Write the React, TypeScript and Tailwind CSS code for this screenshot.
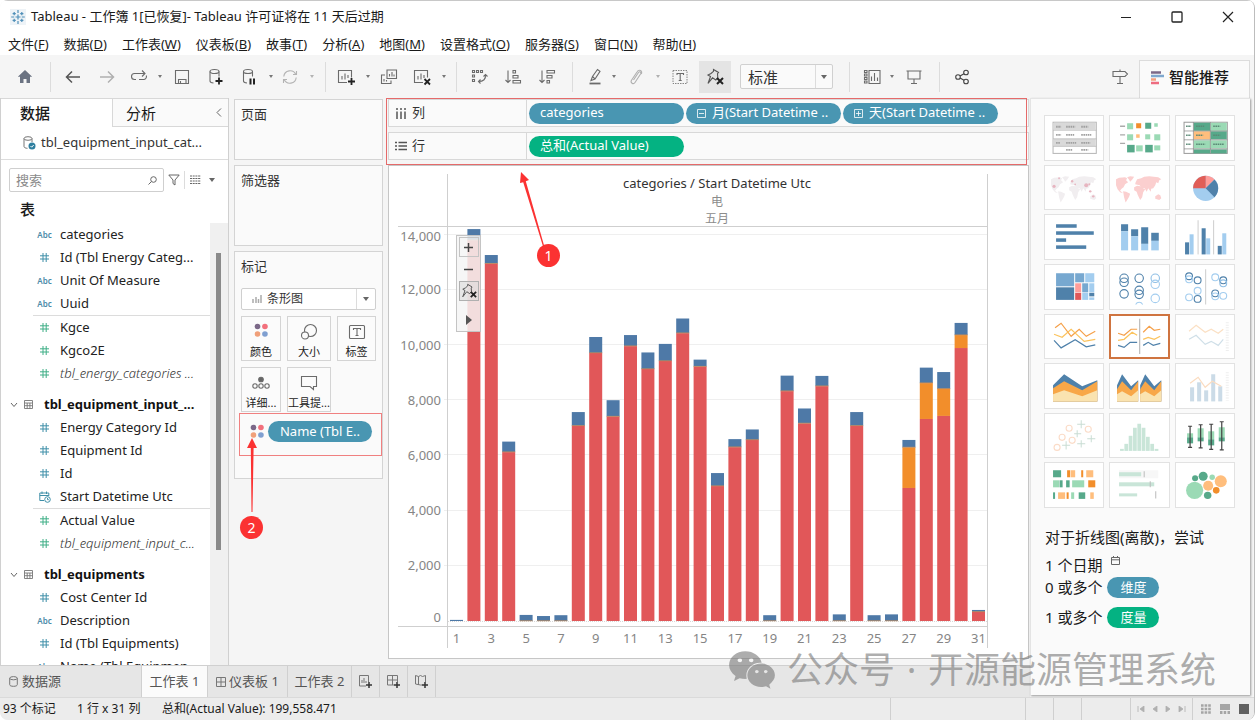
import React from "react";
import { FaWeixin } from "react-icons/fa";

type Kids = { children: React.ReactNode };

/* ---------- small drawing helpers ---------- */

function Glyph({ children, size = 18, color = "#6b6b6b" }: Kids & { size?: number; color?: string }) {
  return (
    <svg width={size} height={size} viewBox="0 0 18 18" fill="none" stroke={color} strokeWidth="1.1" className="shrink-0" aria-hidden="true">
      {children}
    </svg>
  );
}

function Caret({ color = "#666" }: { color?: string }) {
  return (
    <svg width="6" height="4" viewBox="0 0 6 4" aria-hidden="true">
      <path d="M0 0h6L3 4z" fill={color} />
    </svg>
  );
}

function SmallCaret({ color = "#777" }: { color?: string }) {
  return (
    <svg width="4" height="3" viewBox="0 0 4 3" aria-hidden="true">
      <path d="M0 0h4L2 3z" fill={color} />
    </svg>
  );
}

function Pin({ size = 18 }: { size?: number }) {
  return (
    <Glyph size={size} color="#555">
      <path d="M7.5 1.5l5 3-1 1.2.3 4-2 2.3-3.3-2.2L2 15.500l2.500-7L2 7l3-1.500 2.500-2.200z" />
      <path d="M11 10l6 6M17 10l-6 6" stroke="#222" strokeWidth="2" />
    </Glyph>
  );
}

function ColorDots() {
  return (
    <svg width="14" height="14" viewBox="0 0 16 16" className="shrink-0" aria-hidden="true">
      <circle cx="4" cy="4" r="3.200" fill="#7b6888" />
      <circle cx="12.500" cy="4" r="3.200" fill="#f2707c" />
      <circle cx="4" cy="12.500" r="3.200" fill="#f0a07a" />
      <circle cx="12.500" cy="12.500" r="3.200" fill="#7f9fd0" />
    </svg>
  );
}

/* ---------- title bar and menu ---------- */

const menus: [string, string][] = [
  ["文件", "F"], ["数据", "D"], ["工作表", "W"], ["仪表板", "B"], ["故事", "T"], ["分析", "A"],
  ["地图", "M"], ["设置格式", "O"], ["服务器", "S"], ["窗口", "N"], ["帮助", "H"],
];

function TitleBar() {
  return (
    <header className="flex h-[33px] shrink-0 items-center border-t border-[#c8c8c8] bg-white pl-2.5 text-[13px] text-[#1a1a1a]">
      <svg width="16" height="16" viewBox="0 0 16 16" className="mr-[5px] bg-[#eef3f7]" stroke="#4f8fb8" strokeWidth="1.2" aria-hidden="true">
        <path d="M8 5.500v5M5.500 8h5M8 1v3M8 12v3M1.200 8h3M11.800 8h3M4.200 3v3.200M2.600 4.600h3.200M11.800 3v3.200M10.200 4.600h3.200M4.200 9.800V13M2.600 11.400h3.200M11.800 9.800V13M10.200 11.400h3.200" />
      </svg>
      <h1>Tableau - 工作簿 1[已恢复]- Tableau 许可证将在 11 天后过期</h1>
      <div className="ml-auto flex items-center">
        <button aria-label="最小化" className="flex w-[51px] justify-center">
          <svg width="12" height="12" viewBox="0 0 12 12" stroke="#222"><path d="M1 6.500h10" /></svg>
        </button>
        <button aria-label="最大化" className="flex w-[51px] justify-center">
          <svg width="12" height="12" viewBox="0 0 12 12" stroke="#222" fill="none"><rect x="1" y="1" width="10" height="10" rx="1" strokeWidth="1.300" /></svg>
        </button>
        <button aria-label="关闭" className="flex w-[52px] justify-center">
          <svg width="12" height="12" viewBox="0 0 12 12" stroke="#222"><path d="M1 1l10 10M11 1L1 11" strokeWidth="1.200" /></svg>
        </button>
      </div>
    </header>
  );
}

function MenuBar() {
  return (
    <nav className="flex h-[22px] shrink-0 items-center gap-[15px] bg-white pl-2 pt-0.5 text-[13px] text-[#1a1a1a]">
      {menus.map(([name, key]) => (
        <button key={name} className="whitespace-nowrap">
          {name}(<span className="underline">{key}</span>)
        </button>
      ))}
    </nav>
  );
}

/* ---------- toolbar ---------- */

function Tool({ label, className, children }: Kids & { label: string; className: string }) {
  return (
    <button aria-label={label} className={`flex h-8 shrink-0 items-center justify-center ${className}`}>
      {children}
    </button>
  );
}

function Sep({ className }: { className: string }) {
  return <span className={`h-[30px] w-px shrink-0 bg-[#dcdcdc] ${className}`} />;
}

function Toolbar() {
  return (
    <div className="flex h-[43px] shrink-0 items-center">
      <Tool label="主页" className="ml-[9px] w-8">
        <svg width="16" height="15" viewBox="0 0 16 15"><path d="M8 1L.8 7.800H3V14h3.500v-4h3v4H13V7.800h2.200z" fill="#6b7382" /></svg>
      </Tool>
      <Sep className="ml-[9px]" />
      <Tool label="撤消" className="ml-[5px] w-[34px]">
        <Glyph color="#555"><path d="M2.500 9h13.500M8 3.500L2.500 9 8 14.500" strokeWidth="1.500" /></Glyph>
      </Tool>
      <Tool label="重做" className="w-[34px]">
        <Glyph color="#b0b0b0"><path d="M2 9h13.500M10 3.500l5.500 5.500-5.500 5.500" strokeWidth="1.500" /></Glyph>
      </Tool>
      <Tool label="重播" className="w-[30px]">
        <Glyph><path d="M6 11.500H4.500a3 3 0 010-6h10M12 2.500l3 3-3 3M9 11.500h4.500a3 3 0 002.800-4" /></Glyph>
      </Tool>
      <Tool label="重播选项" className="w-3"><SmallCaret /></Tool>
      <Tool label="保存" className="w-8">
        <Glyph><path d="M2.500 2.500h13v13h-13zM5.500 15.500v-4h7.500v4M7.500 15.500V13" /></Glyph>
      </Tool>
      <Tool label="新建数据源" className="w-[34px]">
        <Glyph><ellipse cx="8.500" cy="3.500" rx="4.500" ry="2" /><path d="M4 3.500v9.500c0 1 1.500 1.800 3.500 2M13 3.500v5" /><path d="M13 9.500v7M9.500 13h7" stroke="#222" strokeWidth="1.800" /></Glyph>
      </Tool>
      <Tool label="暂停自动更新" className="w-[34px]">
        <Glyph><ellipse cx="8" cy="3.500" rx="4.500" ry="2" /><path d="M3.500 3.500v9.500c0 1 1.500 1.800 3.500 2M12.500 3.500v5" /><path d="M10.500 10.500v6M14 10.500v6" stroke="#222" strokeWidth="2" /></Glyph>
      </Tool>
      <Tool label="更新选项" className="w-[10px]"><SmallCaret /></Tool>
      <Tool label="刷新" className="w-7">
        <Glyph color="#b3b3b3"><path d="M2.800 8.500a6.300 6.300 0 0112-2M15.200 9.500a6.300 6.300 0 01-12 2M15.500 3v3.500H12M2.500 15v-3.500H6" /></Glyph>
      </Tool>
      <Tool label="刷新选项" className="w-4"><SmallCaret color="#b3b3b3" /></Tool>
      <Sep className="ml-[5px]" />
      <Tool label="新建工作表" className="ml-1 w-8">
        <Glyph><path d="M10 14.500H1.500v-12h13v7M5 11.500V8M8 11.500V5.500M11 10V7" /><path d="M14.500 10v7M11 13.500h7" stroke="#222" strokeWidth="1.800" /></Glyph>
      </Tool>
      <Tool label="新建选项" className="w-3"><SmallCaret /></Tool>
      <Tool label="复制" className="w-[30px]">
        <Glyph><path d="M7 2h9.500v8.500H7zM5 7H1.500v8.500H11V12.500M9.500 8.500V6M12 8.500V4M14 8.500V6.500M4 13.500V11M6.500 13.500V12" /></Glyph>
      </Tool>
      <Tool label="清除工作表" className="w-[35px]">
        <Glyph><path d="M10 14.500H1.500v-12h13v7M5 11.500V8M8 11.500V5.500M11 10V7" /><path d="M11.500 11l5.500 5.500M17 11l-5.500 5.500" stroke="#222" strokeWidth="1.800" /></Glyph>
      </Tool>
      <Tool label="清除选项" className="w-[10px]"><SmallCaret /></Tool>
      <Sep className="ml-[7px]" />
      <Tool label="交换行和列" className="ml-[5px] w-[34px]">
        <Glyph><path d="M2.500 2.500h2v2h-2zM6.500 2.500h2v2h-2zM10.500 2.500h2v2h-2zM2.500 7h2v2h-2zM2.500 11.500h2v2h-2zM15.500 7c.5 4-2 6.500-7 6.500M13.500 8.500l2-2 2 2M10.500 11.500l-2 2 2 2" /></Glyph>
      </Tool>
      <Tool label="升序排序" className="w-[34px]">
        <Glyph><path d="M4 2.500v12M1.500 12L4 14.500 6.500 12M9 2.500h2.500v2.500H9zM9 7.500h5V10H9zM9 12.500h7.500V15H9z" /></Glyph>
      </Tool>
      <Tool label="降序排序" className="w-[34px]">
        <Glyph><path d="M4 2.500v12M1.500 12L4 14.500 6.500 12M9 2.500h7.500V5H9zM9 7.500h5V10H9zM9 12.500h2.500V15H9z" /></Glyph>
      </Tool>
      <Sep className="ml-2" />
      <Tool label="突出显示" className="ml-[7px] w-[30px]">
        <Glyph><path d="M5 12.500l1.500-4L11.500 1.500l2.500 1.800L9 11zM6.500 8.500L9 11" /><path d="M3.500 15.500h11" strokeWidth="1.800" /></Glyph>
      </Tool>
      <Tool label="突出显示选项" className="w-2"><SmallCaret /></Tool>
      <Tool label="成员分组" className="w-9">
        <Glyph color="#b0b0b0"><path d="M6.500 12l5-7.500c1-1.500 3-.2 2.200 1.300L8 14.500c-1.600 2.500-5 .3-3.500-2.200L10 4c2-3.500 6-1 4.300 2" /></Glyph>
      </Tool>
      <Tool label="分组选项" className="w-2"><SmallCaret color="#b0b0b0" /></Tool>
      <Tool label="显示标记标签" className="w-9">
        <Glyph><rect x="2" y="2.500" width="14" height="13" strokeDasharray="1.500 1" strokeWidth=".8" /><path d="M6 7V5.500h6.500V7M9.200 5.500v7M7.700 12.500h3" /></Glyph>
      </Tool>
      <Tool label="固定轴" className="ml-px w-8 bg-[#e4e4e4]"><Pin /></Tool>
      <div className="relative ml-[9px] w-[93px] shrink-0">
        <select aria-label="适合" className="h-[25px] w-full appearance-none rounded-[2px] border border-[#d0d0d0] bg-[#fafafa] pl-[7px] text-[15px] leading-[22px] text-[#333]">
          <option>标准</option>
        </select>
        <span className="pointer-events-none absolute inset-y-px right-px flex w-[17px] items-center justify-center border-l border-[#dcdcdc]"><Caret /></span>
      </div>
      <Sep className="ml-4" />
      <Tool label="显示/隐藏卡" className="ml-[6px] w-8">
        <Glyph><path d="M6 2.500h11v13H6zM8.500 13V8.500M11.500 13V5M14.500 13V9.500M1.500 2.500h2.500v2H1.500zM1.500 6h2.500v2H1.500zM1.500 9.500h2.500v2H1.500zM1.500 13h2.500v2H1.500z" /></Glyph>
      </Tool>
      <Tool label="卡选项" className="w-2"><SmallCaret /></Tool>
      <Tool label="演示模式" className="w-9">
        <Glyph><path d="M1.500 3h15M3 3v8h12V3M9 11v4.500M6 15.500h6" /></Glyph>
      </Tool>
      <Sep className="ml-[7px]" />
      <Tool label="共享" className="ml-[6px] w-8">
        <Glyph color="#444"><circle cx="5" cy="9" r="2.300" /><circle cx="13" cy="4.500" r="2.300" /><circle cx="13" cy="13.500" r="2.300" /><path d="M7 8l4-2.300M7 10l4 2.300" /></Glyph>
      </Tool>
      <Tool label="数据指南" className="ml-auto mr-[3px] w-8">
        <Glyph><path d="M2 3.500h12l2.500 2.500L14 8.500H2zM9 1.500v2M9 8.500v7M6 15.500h6" /></Glyph>
      </Tool>
      <button className="mr-1 mt-[5px] flex w-[111px] shrink-0 items-center gap-[5px] self-stretch border border-b-0 border-[#dcdcdc] bg-[#fafafa] pb-1 pl-[11px] text-[15px] font-medium text-[#1a1a1a]">
        <svg width="13" height="14" viewBox="0 0 13 14" aria-hidden="true">
          <path d="M0 1.500h10" stroke="#7b6888" strokeWidth="2.500" />
          <path d="M0 5h13" stroke="#7fa8cf" strokeWidth="2.500" />
          <path d="M0 8.500h5" stroke="#f2a080" strokeWidth="2.500" />
          <path d="M0 12h8" stroke="#ee6c80" strokeWidth="2.500" />
        </svg>
        智能推荐
      </button>
    </div>
  );
}

/* ---------- data pane ---------- */

type Kind = "abc" | "num" | "date";
type Field = [Kind, string];

function FieldIcon({ kind, color }: { kind: Kind; color: string }) {
  if (kind === "abc") return <span className="w-[16px] text-center text-[8px] font-semibold text-[#4b8aa8]">Abc</span>;
  if (kind === "date")
    return (
      <svg width="12" height="12" viewBox="0 0 12 12" fill="none" stroke={color}>
        <path d="M5 9.500H.8V2h9v3M.8 4.500h9M3 .5V3M7.500.5V3" />
        <circle cx="8.500" cy="8.500" r="2.800" />
        <path d="M8.500 7v1.700h1.300" />
      </svg>
    );
  return (
    <svg width="9" height="9" viewBox="0 0 9 9" stroke={color} strokeWidth="1">
      <path d="M3 0v9M6.200 0v9M0 2.800h9M0 6h9" />
    </svg>
  );
}

function FieldRow({ field, measure, italic }: { field: Field; measure?: boolean; italic?: boolean }) {
  return (
    <li className="flex h-[23px] items-center">
      <span className="ml-[3px] mr-[7px] flex w-[17px] justify-center">
        <FieldIcon kind={field[0]} color={measure ? "#3fae86" : "#3f8fa8"} />
      </span>
      <span className={italic ? "font-light italic text-[#333]" : "text-[#222]"}>{field[1]}</span>
    </li>
  );
}

function FieldGroup({ title, dims, measures }: { title?: string; dims: Field[]; measures: Field[] }) {
  return (
    <section>
      {title && (
        <h3 className="mt-2 flex h-[23px] items-center pl-[9px] font-bold text-[#111]">
          <svg width="8" height="8" viewBox="0 0 8 8" fill="none" stroke="#666"><path d="M1 2l3 3.500L7 2" /></svg>
          <svg width="9" height="9" viewBox="0 0 9 9" fill="none" stroke="#777" strokeWidth=".9" className="ml-[6px] mr-[11px]">
            <path d="M.5.5h8v8h-8zM.5 3h8M.5 5.700h8M3.200 3v5.500M5.900 3v5.500" />
          </svg>
          {title}
        </h3>
      )}
      <ul className="ml-8 border-b border-[#dcdcdc]">
        {dims.map((f) => <FieldRow key={f[1]} field={f} />)}
      </ul>
      <ul className="ml-8">
        {measures.map((f) => <FieldRow key={f[1]} field={f} measure italic={f[1].startsWith("tbl_")} />)}
      </ul>
    </section>
  );
}

function DataPane() {
  return (
    <aside className="flex w-[229px] shrink-0 flex-col border-x border-[#d0d0d0] bg-white">
      <div className="flex h-[29px] shrink-0 border-t border-[#d8d8d8] text-[15px] text-[#1a1a1a]">
        <button className="w-[111px] pl-[19px] text-left font-medium leading-[28px]">数据</button>
        <button className="flex flex-1 items-center justify-between border-b border-l border-[#d8d8d8] bg-[#fafafa] pl-[13px] pr-[6px] leading-[28px]">
          分析
          <svg width="6" height="9" viewBox="0 0 6 9" fill="none" stroke="#666"><path d="M5 .5l-4 4 4 4" /></svg>
        </button>
      </div>
      <div className="flex h-[33px] shrink-0 items-center gap-[5px] whitespace-nowrap border-b border-[#dcdcdc] pl-[22px] text-[13px] text-[#333]">
        <svg width="13" height="14" viewBox="0 0 13 14" fill="none" stroke="#777">
          <ellipse cx="5" cy="2.500" rx="4" ry="1.800" /><path d="M1 2.500v8c0 1 1.500 1.800 3.500 1.800M9 2.500V6" />
          <circle cx="9" cy="10" r="3.500" fill="#2f7f9f" stroke="none" /><path d="M7.500 10l1.200 1.200 2-2.200" stroke="#fff" />
        </svg>
        tbl_equipment_input_cat...
      </div>
      <div className="mt-2 flex h-6 shrink-0 items-center pl-2">
        <label className="flex h-6 w-[155px] items-center rounded-[2px] border border-[#cfcfcf] px-1.5">
          <input aria-label="搜索" placeholder="搜索" className="w-0 flex-1 text-[13px] leading-[18px] outline-none placeholder:text-[#8a8a8a]" />
          <svg width="9" height="9" viewBox="0 0 9 9" fill="none" stroke="#666"><circle cx="5.500" cy="3.500" r="2.800" /><path d="M3.500 5.500L.5 8.500" /></svg>
        </label>
        <button aria-label="筛选" className="flex w-[20px] justify-center">
          <svg width="12" height="12" viewBox="0 0 12 12" fill="none" stroke="#666"><path d="M.8 1h10.400L7 6v5L5 9.500V6z" /></svg>
        </button>
        <span className="h-[18px] w-px bg-[#dcdcdc]" />
        <button aria-label="查看方式" className="ml-[5px] flex items-center gap-2">
          <svg width="11" height="10" viewBox="0 0 11 10" stroke="#666" strokeDasharray="2 .7"><path d="M0 1h11M0 3.500h11M0 6h11M0 8.500h11" /></svg>
          <Caret />
        </button>
      </div>
      <h2 className="h-[31px] shrink-0 pl-[19px] text-[15px] font-medium leading-[35px] text-[#1a1a1a]">表</h2>
      <div className="flex min-h-0 flex-1">
        <div className="min-w-0 flex-1 overflow-hidden whitespace-nowrap text-[13px]">
          <FieldGroup
            dims={[["abc", "categories"], ["num", "Id (Tbl Energy Categ..."], ["abc", "Unit Of Measure"], ["abc", "Uuid"]]}
            measures={[["num", "Kgce"], ["num", "Kgco2E"], ["num", "tbl_energy_categories ..."]]}
          />
          <FieldGroup
            title="tbl_equipment_input_..."
            dims={[["num", "Energy Category Id"], ["num", "Equipment Id"], ["num", "Id"], ["date", "Start Datetime Utc"]]}
            measures={[["num", "Actual Value"], ["num", "tbl_equipment_input_c..."]]}
          />
          <FieldGroup
            title="tbl_equipments"
            dims={[["num", "Cost Center Id"], ["abc", "Description"], ["num", "Id (Tbl Equipments)"], ["abc", "Name (Tbl Equipmen"]]}
            measures={[]}
          />
        </div>
        <div className="w-[18px] bg-[#f0f0f0] pl-[6px] pt-[30px]">
          <div className="h-[72%] w-[5px] bg-[#8a8a8a]" />
        </div>
      </div>
    </aside>
  );
}

/* ---------- shelves ---------- */

function MarkButton({ label, children }: Kids & { label: string }) {
  return (
    <button className="flex h-[45px] flex-col items-center justify-between overflow-hidden whitespace-nowrap border border-[#d4d4d4] bg-[#fbfbfb] pt-[6px] text-[11px] leading-[16px] text-[#222]">
      {children}
      <span>{label}</span>
    </button>
  );
}

function Badge({ n, className }: { n: number; className: string }) {
  return (
    <span className={`absolute flex h-[23px] w-[23px] items-center justify-center rounded-full bg-[#fb3232] text-[14px] text-white ${className}`}>
      {n}
    </span>
  );
}

function SideShelves() {
  return (
    <div className="relative mx-[5px] flex w-[149px] shrink-0 flex-col pt-px text-[13px] text-[#333]">
      <section className="h-[61px] border border-[#d4d4d4] bg-[#fafafa] px-[6px] pt-[5px]">页面</section>
      <section className="mt-[5px] h-[81px] border border-[#d4d4d4] bg-[#fafafa] px-[6px] pt-[5px]">筛选器</section>
      <section className="mt-[5px] h-[228px] border border-[#d4d4d4] bg-[#fafafa] px-[6px] pt-[5px]">
        <h2>标记</h2>
        <div className="relative mt-[11px]">
          <span className="pointer-events-none absolute left-[11px] top-[6px]">
            <svg width="10" height="10" viewBox="0 0 10 10" stroke="#aaa" strokeWidth="1.500"><path d="M1 9V5M4 9V3M6.500 9V5M9 9V1" /></svg>
          </span>
          <select aria-label="标记类型" className="block h-[22px] w-[135px] appearance-none rounded-[2px] border border-[#cfcfcf] bg-white pl-[25px] text-[12px] leading-[18px] text-[#333]">
            <option>条形图</option>
          </select>
          <span className="pointer-events-none absolute inset-y-px right-px flex w-[19px] items-center justify-center border-l border-[#dcdcdc]"><Caret /></span>
        </div>
        <div className="mt-[6px] grid grid-cols-[40px_44px_39px] gap-[6px]">
          <MarkButton label="颜色"><ColorDots /></MarkButton>
          <MarkButton label="大小">
            <Glyph><circle cx="10.500" cy="7.500" r="6" /><circle cx="5" cy="12.500" r="3.500" fill="#fbfbfb" /></Glyph>
          </MarkButton>
          <MarkButton label="标签">
            <Glyph><rect x="1.500" y="2.500" width="15" height="13" rx="1" /><path d="M5.500 7V5.500h7V7M9 5.500v7M7.500 12.500h3" /></Glyph>
          </MarkButton>
          <MarkButton label="详细...">
            <Glyph><circle cx="9" cy="5.500" r="2.300" fill="#666" /><circle cx="3" cy="12" r="2.200" /><circle cx="9" cy="12" r="2.200" /><circle cx="15" cy="12" r="2.200" /></Glyph>
          </MarkButton>
          <MarkButton label="工具提...">
            <Glyph><path d="M1.500 2.500h15v10h-3v3l-3.500-3H1.500z" /></Glyph>
          </MarkButton>
        </div>
        <div className="-ml-0.5 -mr-1.5 mt-px flex h-[43px] items-center gap-1 border border-[#f08080] pb-[6px] pl-[10px]">
          <ColorDots />
          <button className="h-[21px] w-[104px] whitespace-nowrap rounded-full bg-[#4996b2] text-center text-[13px] leading-[20px] text-white">Name (Tbl E..</button>
        </div>
      </section>
      <svg className="absolute left-[12px] top-[340px]" width="12" height="75" viewBox="0 0 12 75" aria-hidden="true">
        <path d="M5.500 74L4.800 10H1L6 0l5 10H7.600L6.500 74z" fill="#fb3232" />
      </svg>
      <Badge n={2} className="left-[6px] top-[418px]" />
    </div>
  );
}

/* ---------- chart ---------- */

// Daily totals in thousands: [day total, top of the second series, top of the first series].
const days: number[][] = [
  [0.04, 0, 0], [14.2, 13.8, 13.8], [13.26, 12.95, 12.95], [6.5, 6.12, 6.12], [0.22, 0, 0], [0.18, 0, 0], [0.21, 0, 0],
  [7.57, 7.07, 7.07], [10.29, 9.71, 9.71], [8.0, 7.41, 7.41], [10.36, 9.96, 9.96], [9.73, 9.13, 9.13],
  [10.04, 9.42, 9.42], [10.96, 10.43, 10.43], [9.47, 9.22, 9.22], [5.36, 4.89, 4.89], [6.59, 6.3, 6.3],
  [6.94, 6.56, 6.56], [0.21, 0, 0], [8.89, 8.33, 8.33], [7.7, 7.16, 7.16], [8.88, 8.51, 8.51], [0.24, 0, 0],
  [7.57, 7.07, 7.07], [0.21, 0, 0], [0.24, 0, 0], [6.56, 6.29, 4.82], [9.18, 8.62, 7.32], [9.02, 8.41, 7.43],
  [10.8, 10.36, 9.89], [0.4, 0.33, 0.33],
];

const BASE = 455;
const LEFT = 59;
const STEP = 17.4;
const up = (v: number) => BASE - v * 27.6;

function Chart() {
  return (
    <div className="relative mt-[5px] min-h-0 flex-1 border border-[#c6c6c6] bg-white">
      <svg viewBox="0 0 639 490" preserveAspectRatio="xMinYMin meet" className="block h-full w-full" role="img" aria-label="categories / Start Datetime Utc">
        <text x="328" y="22" textAnchor="middle" fontSize="13" fill="#333">categories / Start Datetime Utc</text>
        <text x="328" y="40" textAnchor="middle" fontSize="12" fill="#8c8c8c">电</text>
        <text x="328" y="57" textAnchor="middle" fontSize="12" fill="#8c8c8c">五月</text>
        {[0, 2, 4, 6, 8, 10, 12, 14].map((v) => (
          <g key={v}>
            {v > 0 && <path d={`M55 ${Math.round(up(v)) - 0.5}H598`} stroke="#efefef" />}
            <text x="52" y={up(v) + (v === 0 ? 1 : v === 14 ? 6 : 4.5)} textAnchor="end" fontSize="13" fill="#858585">{v === 0 ? "0" : `${v},000`}</text>
          </g>
        ))}
        <path d="M9 60.500H598M9 460.500H598M58.500 8V482M598.500 8V482" stroke="#cfcfcf" fill="none" />
        <path d="M59 455.500H598" stroke="#d8d8d8" strokeDasharray="1 1" />
        {days.map(([total, mid, low], i) => {
          const x = LEFT + 2 + i * STEP;
          return (
            <g key={i}>
              <rect x={x} y={up(total)} width="13" height={(total - mid) * 27.6} fill="#4e79a7" />
              <rect x={x} y={up(mid)} width="13" height={(mid - low) * 27.6} fill="#f28e2b" />
              <rect x={x} y={up(low)} width="13" height={low * 27.6} fill="#e15759" />
              {total > 0.1 && <rect x={x} y={up(mid) - 0.6} width="13" height="0.8" fill="#c08a5a" />}
              {i % 2 === 0 && <text x={x + 6.5} y="477" textAnchor="middle" fontSize="13" fill="#858585">{i + 1}</text>}
            </g>
          );
        })}
      </svg>
      <div className="absolute left-[67px] top-[69px] flex h-[97px] w-[25px] flex-col items-center border border-[#c4c4c4] bg-[#f4f4f4]/85 pt-px">
        <button aria-label="放大" className="flex h-5 w-5 items-center justify-center border border-[#c4c4c4]">
          <svg width="9" height="9" viewBox="0 0 9 9" stroke="#444" strokeWidth="1.500"><path d="M4.500 0v9M0 4.500h9" /></svg>
        </button>
        <button aria-label="缩小" className="flex h-6 w-5 items-center justify-center">
          <svg width="9" height="9" viewBox="0 0 9 9" stroke="#444" strokeWidth="1.500"><path d="M0 4.500h9" /></svg>
        </button>
        <button aria-label="重置轴" className="flex h-5 w-5 items-center justify-center border border-[#b0b0b0] bg-[#dcdcdc]/60"><Pin size={16} /></button>
        <button aria-label="更多工具" className="mt-[9px] flex h-5 w-5 items-center justify-center">
          <svg width="6" height="10" viewBox="0 0 6 10"><path d="M0 0v10l6-5z" fill="#555" /></svg>
        </button>
      </div>
    </div>
  );
}

function Pill({ children, green }: Kids & { green?: boolean }) {
  return (
    <button className={green
      ? "flex h-[21px] w-[155px] items-center gap-[6px] whitespace-nowrap rounded-full bg-[#04b282] pl-[11px] text-[13px] text-white"
      : "flex h-[21px] w-[155px] items-center gap-[6px] whitespace-nowrap rounded-full bg-[#4996b2] pl-[11px] text-[13px] text-white"}>
      {children}
    </button>
  );
}

function BoxSign({ plus }: { plus?: boolean }) {
  return (
    <svg width="9" height="9" viewBox="0 0 9 9" fill="none" stroke="#fff" strokeWidth=".8" className="shrink-0">
      <path d={plus ? "M.5.5h8v8h-8zM2 4.500h5M4.500 2v5" : "M.5.5h8v8h-8zM2 4.500h5"} />
    </svg>
  );
}

function Worksheet() {
  return (
    <main className="relative mb-[6px] mr-px flex min-w-0 flex-1 flex-col">
      <div className="relative mt-px flex flex-col gap-[5px]">
        <div className="flex h-7 items-center border border-[#d8d8d8] bg-[#fafafa]">
          <h2 className="flex w-[138px] items-center gap-[5px] self-stretch border-r border-[#d8d8d8] pl-[6px] text-[13px] text-[#333]">
            <svg width="12" height="11" viewBox="0 0 12 11" stroke="#555" strokeWidth="1.500"><path d="M2 0v2M2 3.500V11M6 0v2M6 3.500V11M10 0v2M10 3.500V11" /></svg>
            列
          </h2>
          <div className="flex gap-[2px] pl-[2px]">
            <Pill>categories</Pill>
            <Pill><BoxSign />月(Start Datetime ..</Pill>
            <Pill><BoxSign plus />天(Start Datetime ..</Pill>
          </div>
        </div>
        <div className="flex h-7 items-center border border-[#d8d8d8] bg-[#fafafa]">
          <h2 className="flex w-[138px] items-center gap-[5px] self-stretch border-r border-[#d8d8d8] pl-[6px] text-[13px] text-[#333]">
            <svg width="12" height="10" viewBox="0 0 12 10" stroke="#555" strokeWidth="1.500"><path d="M0 1.500h2M3.500 1.500H12M0 5h2M3.500 5H12M0 8.500h2M3.500 8.500H12" /></svg>
            行
          </h2>
          <div className="pl-[2px]"><Pill green>总和(Actual Value)</Pill></div>
        </div>
        <div className="pointer-events-none absolute -bottom-[5px] -left-[2px] -top-px right-[2px] border border-[#e56a6a]" />
      </div>
      <Chart />
      <svg className="absolute left-[130px] top-[74px]" width="30" height="76" viewBox="0 0 30 76" aria-hidden="true">
        <path d="M3 0l8 8-3.200 1.300L26.500 75h-1.300L5.200 10.300 2 11z" fill="#fb3232" />
      </svg>
      <Badge n={1} className="left-[149px] top-[146px]" />
    </main>
  );
}

/* ---------- show-me panel ---------- */

const B = "#4f81aa";
const L = "#a3cdef";
const G = "#57a98a";
const LG = "#9bdab5";
const O = "#f28e2b";
const LO = "#ffbe7d";

function sq(list: [number, number, number, number, string][]) {
  return list.map(([x, y, w, h, c], i) => <rect key={i} x={x} y={y} width={w} height={h} fill={c} />);
}

function rings(list: [number, number, string][], r: number) {
  return list.map(([x, y, c], i) => <circle key={i} cx={x} cy={y} r={r} fill="none" stroke={c} strokeWidth="1.100" />);
}

const world =
  "M7 14l3-1.500 6-.5 2 1-1 2 2 2-3 2-1.500 3-2 1.500-1.500 2 3 2.500-3-1-2.500-3-1.500-4zM18 12l3-1 4 .5-2 3-2 2-1-2zM14 26l3 .5 4 2-1 3-2.500 4-1 1.500-1.500-5zM25 22l3-1.500 3 .5 3 2 2 1-2 3-1 5-2 2.500-2.500-5-1-3-2.500-1.500zM26 19l.5-2 1.500-3 4-1 3-1.500 5-.5 9 1 3 2-2 1-1 3-2-1-1 3-2 3-2 .5-.5 3-2.500-3.500-1.500 3.500-2-3.500-3-.5-2-2.500zM46 31l3-2 2 1 1 3-2 1.500-4-1z";

const thumbs: React.ReactNode[] = [
  <g key="text">
    <rect x="9" y="7" width="43" height="31" fill="#fff" stroke="#b5b5b5" />
    {sq([[9.5, 7.5, 42, 7, "#d9d9d9"], [9.5, 23.5, 42, 7.5, "#d9d9d9"]])}
    <path d="M12 11.500h5M22 11.500h9M37 11.500h7M12 19.500h5M22 19.500h8M37 19.500h10M12 27.500h4M22 27.500h10M37 27.500h9M22 34.500h6M37 34.500h7" stroke="#a0a0a0" strokeWidth="1.800" strokeDasharray="1.600 .6" />
    <path d="M9 15h43M9 23.500h43M9 31h43" stroke="#b5b5b5" strokeWidth=".7" />
  </g>,
  <g key="heat">
    <path d="M11 11h5M11 19.500h5M11 28h5" stroke="#aaa" strokeWidth="1.300" />
    {sq([[18, 8, 6, 6, LG], [27, 8, 5, 5, O], [36, 7.5, 6, 6, G], [45, 8, 3.5, 3.5, LG], [18, 19, 6, 6, LG], [27, 19, 3.5, 3.5, LO], [36, 19, 5, 5, LG], [45, 19, 6, 6, LG], [18, 29.5, 7.5, 7.5, G], [27, 30, 6.5, 6, LG], [36, 29.5, 7.5, 7.5, G], [45, 30, 6, 5, LG]])}
  </g>,
  <g key="highlight">
    <rect x="9" y="7" width="43" height="31" fill="#fff" stroke="#999" />
    {sq([[18.5, 7.5, 16.5, 8, G], [35.5, 7.5, 16, 8, LG], [18.5, 16, 16.5, 8, LO], [35.5, 16, 16, 8, G], [18.5, 25, 16.5, 8, LG], [35.5, 25, 16, 8, LG], [18.5, 34, 16.5, 4, G], [35.5, 34, 16, 4, G]])}
    <path d="M11 11h5M11 20h5M11 29h5M21 11h8M38 11h7M21 20h7M38 20h7M21 29h9M38 29h11" stroke="#5b8a76" strokeWidth="1.500" strokeDasharray="1.600 .6" />
    <path d="M9 15.700h43M9 24.500h43M9 33.500h43M18.300 7v31M35.200 7v31" stroke="#888" strokeWidth=".7" />
  </g>,
  <g key="symbol">
    <path d={world} fill="#f1eef0" />
    {[[10, 21, 1.6], [28, 16, 1.2], [42, 20, 2], [46, 26, 1.2], [31, 19, 0.9], [15, 13, 0.9], [49, 31, 1.2], [45, 19, 1]].map(([x, y, r], i) => <circle key={i} cx={x} cy={y} r={r} fill="#e7b5c0" />)}
  </g>,
  <path key="map" d={world} fill="#fbcfcf" />,
  <g key="pie">
    <circle cx="30.500" cy="23" r="12.500" fill={L} />
    <path d="M30.500 23V10.500A12.500 12.500 0 0139.300 14.200z" fill="#ff9d9a" />
    <path d="M30.500 23l8.800-8.800a12.500 12.500 0 010 17.600z" fill={B} />
    <path d="M30.500 23H18A12.500 12.500 0 0130.500 10.500z" fill="#e15e57" />
  </g>,
  <g key="hbar">{sq([[12, 10, 20.5, 3.5, B], [12, 17, 37.5, 3.5, B], [12, 24, 10, 3.5, B], [12, 31, 30, 3.5, B]])}</g>,
  <g key="stack">{sq([[12, 10, 7, 7, B], [12, 17, 7, 19, L], [22, 15, 7, 7, B], [22, 22, 7, 14, L], [32, 13, 7, 16.5, B], [32, 29.5, 7, 6.5, L], [42, 18.5, 7.5, 8, B], [42, 26.5, 7.5, 9.5, L]])}</g>,
  <g key="side">{sq([[10, 28, 4, 12, B], [14.5, 20, 4, 20, L], [26.5, 14, 4, 26, B], [31, 24, 4, 16, L], [42.5, 31.5, 4, 8.5, B], [47, 19, 4, 21, L], [22.5, 6, 0.9, 34, "#c8c8c8"], [38, 6, 0.9, 34, "#c8c8c8"]])}</g>,
  <g key="tree">{sq([[12, 9, 18, 13, "#77a8d0"], [12, 23, 18, 12.5, B], [31, 9, 9, 9, "#77a8d0"], [41, 9, 9, 9, L], [31, 19, 6, 9, "#ff9d9a"], [31, 28.5, 6, 7, "#e15759"], [38, 19, 6, 9, "#77a8d0"], [45, 19, 5, 9, L], [38, 28.5, 6, 7, L], [45, 28.5, 5, 3.5, B], [45, 33, 5, 2.5, L]])}</g>,
  <g key="circles">{rings([[15, 14, B], [15, 18, B], [15, 29.5, B], [30, 14, B], [30, 26, B], [30, 30, B], [46, 14, "#8fbfe5"], [46, 20, L], [46, 34, L]], 4.2)}<path d="M26.500 40a4 4 0 017 0" fill="none" stroke={L} /></g>,
  <g key="sidecircles">{rings([[14, 12, B], [14, 15, L], [22.5, 16, B], [22.5, 26.5, L], [14, 33, L], [22.5, 34.5, B], [40, 13, L], [48, 16, B], [48, 19, "#8fbfe5"], [40, 29, B], [40, 32, L], [48, 31.5, L]], 3.4)}<path d="M30.500 5v35" stroke="#ccc" /></g>,
  <g key="lines" fill="none" strokeWidth="1.200"><path d="M11 13.500l6-4.500 10 13 8-7 7 7 9-5" stroke="#f5a04a" /><path d="M10 20l8 3 9-8 13 12 11-2" stroke="#fbc35d" /><path d="M10 26l7 7.500 14-8 11 7 9-2" stroke={B} /></g>,
  <g key="lines2" fill="none" strokeWidth="1.200"><path d="M9 19l6 2 7-6h6M34 18l6-6 5 4 6-1" stroke="#f5a04a" /><path d="M9 26l6-1 8-7 5 3M34 25l5-2 6 2 6-3" stroke="#fbc35d" /><path d="M9 31l6 2 6-5h7M34 31l5-3 5 3 7-2" stroke={B} /><path d="M30.500 4.500v35" stroke="#bbb" /></g>,
  <g key="dual" fill="none" strokeWidth="1.200"><path d="M14 17l7-6 9 7 6-3 7 4 5-4" stroke="#fbe0c4" /><path d="M14 25l7-4 9 9 6-3 7 4 5-6" stroke="#cfdfe8" /><path d="M52 8v29" stroke="#eeeeee" strokeDasharray="1 1.500" strokeWidth="3" /></g>,
  <g key="area"><path d="M9 22l11-11 18 12 15-6v21H9z" fill={B} /><path d="M9 25l11-7 18 9 15-9v20H9z" fill="#f8a748" /><path d="M9 31l11-4 18 6 15-6v11H9z" fill="#fae3b0" /></g>,
  <g key="area2"><path d="M8 22l5-11 9 12 7-6v21H8zM31 22l5-11 9 12 7-6v21H31z" fill={B} /><path d="M8 26l5-8 9 9 7-9v20H8zM31 26l5-8 9 9 7-9v20H31z" fill="#f8a748" /><path d="M8 31l5-3 9 5 7-6v11H8zM31 31l5-3 9 5 7-6v11H31z" fill="#fae3b0" /></g>,
  <g key="combo">{sq([[15, 24, 4, 14, "#cbdbe7"], [22, 19, 4, 19, "#cbdbe7"], [29, 27, 4, 11, "#cbdbe7"], [36, 11, 4, 27, "#cbdbe7"], [43, 23, 4, 15, "#cbdbe7"]])}<path d="M15 20l8-6 7 10 7-6 9 5" fill="none" stroke="#fbdcc0" strokeWidth="1.200" /><path d="M52 9v28" stroke="#eeeeee" strokeDasharray="1 1.500" strokeWidth="3" /></g>,
  <g key="scatter">{rings([[25, 15, "#fbdcc8"], [44, 16, "#fbdcc8"], [18, 24, "#fbdcc8"], [28, 27, "#fbdcc8"], [13, 34, "#fbdcc8"]], 3)}<path d="M37 7v8M33 11h8M33 17v7M30 20.500h7M47 22v7M43 25.500h8M22 28v8M18 32h8M37 27v7M33 30.500h8" stroke="#c9ddd4" /></g>,
  <g key="hist">{[2, 7, 15, 23, 27, 23, 14, 7, 2].map((h, i) => <rect key={i} x={11 + i * 4.3} y={37.5 - h} width="3.700" height={h} fill="#c9e5d8" />)}</g>,
  <g key="box">{sq([[12, 20, 6, 4, LG], [12, 24, 6, 6, G], [22.5, 15, 6, 9, LG], [22.5, 24, 6, 4, G], [33, 18, 6, 8, LG], [33, 26, 6, 6, G], [43.5, 14, 6, 10, LG], [43.5, 24, 6, 4, G]])}<path d="M15 13v21M13 13h4M13 34h4M25.500 11.500v23M23.500 11.500h4M23.500 34.500h4M36 11v25M34 11h4M34 36h4M46.500 8.500v28M44.500 8.500h4M44.500 36.500h4" stroke="#444" strokeWidth="1.200" /></g>,
  <g key="gantt">{sq([[9, 8, 8, 7, G], [23, 8, 3, 7, O], [26.5, 8, 4.5, 7, LO], [37, 8, 2, 7, O], [42, 8, 7, 7, LO], [9, 18, 6, 7, LG], [15.5, 18, 3, 7, G], [22, 18, 3.5, 7, G], [28, 18, 12, 7, LG], [44, 18, 7, 7, O], [9, 30, 2, 6.5, G], [14, 30, 7, 6.5, LO], [22.5, 30, 2, 6.5, O], [27, 30, 3, 6.5, LG], [34.5, 30, 6.5, 6.5, G], [46, 30, 3.5, 6.5, LO]])}</g>,
  <g key="bullet">{sq([[10, 8, 39, 8, "#f7f7f7"], [10, 10, 22, 4, "#c9e5d8"], [10, 20, 35, 4, "#c9e5d8"], [10, 31, 18, 3, "#c9e5d8"]])}<path d="M35 9v6M41 19v6M46.500 29v7" stroke="#bbb" /></g>,
  <g key="bubbles">{[[19.5, 28, 8.5, LG], [20, 16, 3, G], [28, 14, 4.5, G], [37, 15, 2.7, LG], [45.5, 19, 6, LO], [33, 23.5, 5, LO], [41, 28, 3.3, O], [32.5, 33, 3.7, G]].map(([x, y, r, c], i) => <circle key={i} cx={x as number} cy={y as number} r={r as number} fill={c as string} />)}</g>,
];

function ShowMe() {
  return (
    <aside className="mb-[2px] mr-1 flex w-[220px] shrink-0 flex-col border-l border-t border-[#e4e4e4] bg-[#fafafa] pl-[13px] pt-4 text-[15px] text-[#1a1a1a] shadow-[1px_1px_2px_#999]">
      <div className="grid h-[393px] w-[191px] shrink-0 grid-cols-3 grid-rows-8 gap-x-[5px] gap-y-1">
        {thumbs.map((t, i) => (
          <button key={i} aria-label={`图表类型 ${i + 1}`} className={i === 13 ? "overflow-hidden bg-white outline-2 -outline-offset-2 outline-[#cf7440]" : "overflow-hidden bg-white outline-1 -outline-offset-1 outline-[#e2e2e2]"}>
            <svg viewBox="0 0 60 45" className="block h-full w-full">{t}</svg>
          </button>
        ))}
      </div>
      <p className="mt-[17px] h-[24px] pl-px leading-[24px]">对于折线图(离散)，尝试</p>
      <p className="mt-1 flex h-[23px] items-center gap-[9px] pl-px leading-[22px]">
        1 个日期
        <svg width="9" height="9" viewBox="0 0 9 9" fill="none" stroke="#666" className="-mt-2"><path d="M.5 1.500h8v7h-8zM.5 3.800h8M2.500 0v2M6.500 0v2" /></svg>
      </p>
      <p className="flex h-[22px] items-center gap-[5px] pl-px leading-[22px]">
        0 或多个
        <span className="h-[21px] w-[52px] rounded-full bg-[#4996b2] text-center text-[13px] leading-[20px] text-white">维度</span>
      </p>
      <p className="mt-[8px] flex h-[22px] items-center gap-[5px] pl-px leading-[22px]">
        1 或多个
        <span className="h-[21px] w-[52px] rounded-full bg-[#04b282] text-center text-[13px] leading-[20px] text-white">度量</span>
      </p>
    </aside>
  );
}

/* ---------- bottom bars ---------- */

function SheetTabs() {
  return (
    <div className="flex h-8 shrink-0 items-stretch border-t border-[#d0d0d0] bg-[#e6e6e6] text-[13px] text-[#555]">
      <button className="flex w-[142px] items-center gap-[4px] border-r border-[#d0d0d0] pl-[9px]">
        <svg width="9" height="11" viewBox="0 0 9 11" fill="none" stroke="#777"><ellipse cx="4.500" cy="2.200" rx="3.800" ry="1.600" /><path d="M.7 2.200v6.500c0 1 1.500 1.600 3.800 1.600s3.800-.6 3.800-1.600V2.200" /></svg>
        数据源
      </button>
      <button className="w-[65px] whitespace-nowrap bg-[#fbfbfb]">工作表 1</button>
      <button className="flex w-[81px] items-center justify-center gap-[3px] whitespace-nowrap border-x border-[#d0d0d0]">
        <svg width="10" height="10" viewBox="0 0 10 10" fill="none" stroke="#777"><path d="M.5.500h9v9h-9zM5 .5v9M.5 5h9" /></svg>
        仪表板 1
      </button>
      <button className="w-[64px] whitespace-nowrap border-r border-[#d0d0d0]">工作表 2</button>
      {[["新建工作表", "M8 12H1.500V1.500h9V8M4 9V6M6 9V4M8 9V7"], ["新建仪表板", "M8 11H1.500V1.500h10V8M6.500 1.500V11M1.500 6h10"], ["新建故事", "M8 11H6.500L1.500 10V1.500l3 1 2-1 2 1 3-1V8M4.500 2.500V11"]].map(([label, d]) => (
        <button key={label} aria-label={label} className="flex w-[28px] items-center justify-center border-r border-[#d0d0d0]">
          <svg width="15" height="15" viewBox="0 0 15 15" fill="none" stroke="#777"><path d={d} /><path d="M11 8v6M8 11h6" stroke="#333" strokeWidth="1.500" /></svg>
        </button>
      ))}
    </div>
  );
}

function StatusBar() {
  return (
    <footer className="flex h-[23px] shrink-0 items-center whitespace-nowrap border-t border-[#dadada] bg-[#ececec] pl-[3px] text-[12px] text-[#1a1a1a]">
      <span className="w-[74px]">93 个标记</span>
      <span className="w-[85px]">1 行 x 31 列</span>
      <span>总和(Actual Value): 199,558.471</span>
      <div className="ml-auto flex h-full items-center">
        <span className="h-full w-[136px] border-x border-[#cfcfcf]" />
        <span className="h-full w-[28px] border-r border-[#cfcfcf]" />
        <span className="h-full w-[28px] border-r border-[#cfcfcf]" />
        <span className="h-full w-[49px] border-r border-[#cfcfcf]" />
        <div className="flex h-full w-[62px] items-center justify-between border-r border-[#cfcfcf] px-[6px]">
          {["M1 0v6M7 0L3 3l4 3z", "M6 0L2 3l4 3z", "M2 0l4 3-4 3z", "M7 0v6M1 0l4 3-4 3z"].map((d) => (
            <button key={d} aria-label="切换工作表"><svg width="8" height="6" viewBox="0 0 8 6" fill="#b0b0b0" stroke="#b0b0b0" strokeWidth=".8"><path d={d} /></svg></button>
          ))}
        </div>
        <div className="flex w-[61px] items-center justify-between pl-[8px] pr-[5px]">
          <button aria-label="工作表排序"><svg width="10" height="10" viewBox="0 0 10 10" stroke="#a5a5a5" strokeWidth="2.600" strokeDasharray="2.600 1"><path d="M0 1.500h10M0 5h10M0 8.500h10" /></svg></button>
          <button aria-label="胶片视图"><svg width="10" height="10" viewBox="0 0 10 10"><path d="M0 0h10v6H0zM0 7h2.500v3H0zM3.700 7h2.500v3H3.700zM7.500 7H10v3H7.500z" fill="#a5a5a5" /></svg></button>
          <button aria-label="标签视图"><svg width="10" height="10" viewBox="0 0 10 10"><path d="M0 0h10v10H0z" fill="#606060" /></svg></button>
        </div>
      </div>
    </footer>
  );
}

export default function App() {
  return (
    <div className="relative flex h-screen min-h-[720px] w-full flex-col overflow-hidden rounded-lg border-r border-[#bdbdbd] bg-[#f5f5f5] font-['Noto_Sans','Noto_Sans_CJK_SC',sans-serif]">
      <TitleBar />
      <MenuBar />
      <Toolbar />
      <div className="flex min-h-0 flex-1">
        <div className="flex min-w-0 flex-1 flex-col">
          <div className="flex min-h-0 flex-1">
            <DataPane />
            <SideShelves />
            <Worksheet />
          </div>
          <SheetTabs />
        </div>
        <ShowMe />
      </div>
      <StatusBar />
      <div className="pointer-events-none absolute bottom-[26px] right-[38px] flex items-center text-[36px] leading-[48px] text-[#777]/60">
        <FaWeixin size={48} className="mr-[11px]" />
        <span>公众号</span>
        <span className="w-[33px] text-center">·</span>
        <span>开源能源管理系统</span>
      </div>
    </div>
  );
}
